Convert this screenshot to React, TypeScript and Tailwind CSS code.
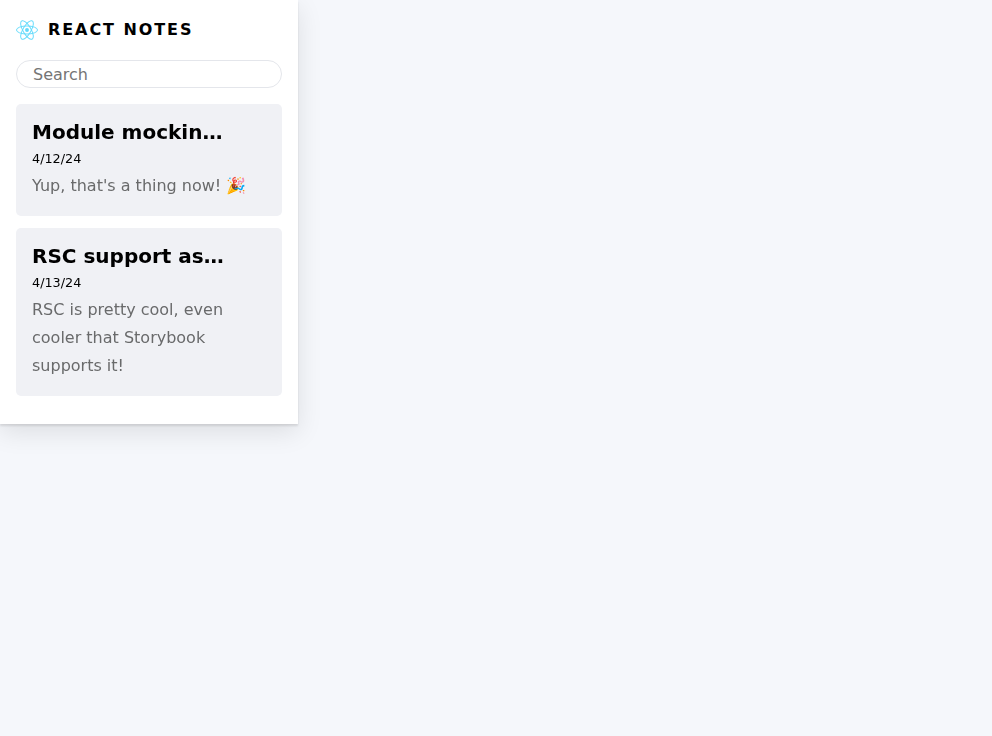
const notes = [
  { title: 'Module mockin…', date: '4/12/24', text: "Yup, that's a thing now! 🎉" },
  { title: 'RSC support as…', date: '4/13/24', text: 'RSC is pretty cool, even cooler that Storybook supports it!' },
];

function Logo() {
  return (
    <svg viewBox="-11.5 -10.23174 23 20.46348" className="h-5 w-[22px]" role="presentation">
      <circle r="2.05" fill="#61dafb" />
      <g stroke="#61dafb" fill="none">
        <ellipse rx="11" ry="4.2" />
        <ellipse rx="11" ry="4.2" transform="rotate(60)" />
        <ellipse rx="11" ry="4.2" transform="rotate(120)" />
      </g>
    </svg>
  );
}

export default function App() {
  return (
    <div className="min-h-screen bg-[#f5f7fb] font-['DejaVu_Sans',sans-serif] text-black">
      <section className="h-[424px] w-[298px] bg-white shadow-[0px_8px_24px_rgba(0,0,0,0.1),0px_2px_2px_rgba(0,0,0,0.1)]">
        <header className="flex h-[60px] items-center gap-2.5 px-4">
          <Logo />
          <strong className="text-[16px] leading-[28px] font-bold tracking-[1.92px] uppercase">React Notes</strong>
        </header>
        <div className="px-4">
          <input placeholder="Search" className="block h-7 w-full rounded-full border border-[#e4e6eb] bg-white px-4 text-[16px] text-black outline-none placeholder:text-[#757575]" />
        </div>
        <ul className="flex flex-col gap-3 px-4 pt-4">
          {notes.map((n) => (
            <li key={n.date} className="rounded-[5px] bg-[#f0f1f5] px-4 pt-3.5 pb-4 will-change-transform">
              <strong className="block text-[20px] leading-[28px] font-bold whitespace-nowrap">{n.title}</strong>
              <small className="block h-[26px] text-[12.8px] leading-[25px]">{n.date}</small>
              <p className="text-[16px] leading-[28px] text-[#696a6b]">{n.text}</p>
            </li>
          ))}
        </ul>
      </section>
    </div>
  );
}
